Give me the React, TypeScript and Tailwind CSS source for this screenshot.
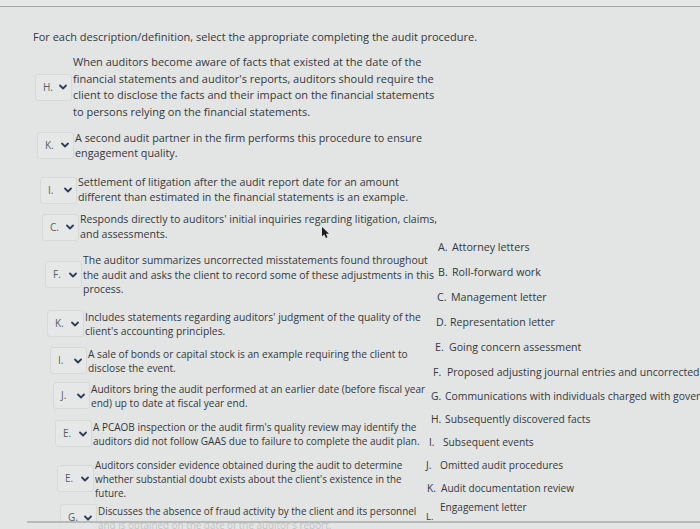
import type { ReactNode } from "react";

type Item = {
  value: string;
  className: string;
  text: string;
  lines: string[];
};

const items: Item[] = [
  {
    value: "H.",
    className: "ml-[35px] mt-[9px]",
    text: "text-[11px] leading-[16.5px]",
    lines: [
      "When auditors become aware of facts that existed at the date of the",
      "financial statements and auditor's reports, auditors should require the",
      "client to disclose the facts and their impact on the financial statements",
      "to persons relying on the financial statements.",
    ],
  },
  {
    value: "K.",
    className: "ml-[37px] mt-[10px]",
    text: "text-[10.8px] leading-[15px]",
    lines: ["A second audit partner in the firm performs this procedure to ensure", "engagement quality."],
  },
  {
    value: "I.",
    className: "ml-[40px] mt-[15px]",
    text: "text-[10.7px] leading-[15px]",
    lines: [
      "Settlement of litigation after the audit report date for an amount",
      "different than estimated in the financial statements is an example.",
    ],
  },
  {
    value: "C.",
    className: "ml-[42px] mt-[7px]",
    text: "text-[10.6px] leading-[15px]",
    lines: ["Responds directly to auditors' initial inquiries regarding litigation, claims,", "and assessments."],
  },
  {
    value: "F.",
    className: "ml-[45px] mt-[11px]",
    text: "text-[10.45px] leading-[14.5px]",
    lines: [
      "The auditor summarizes uncorrected misstatements found throughout",
      "the audit and asks the client to record some of these adjustments in this",
      "process.",
    ],
  },
  {
    value: "K.",
    className: "ml-[47px] mt-[13px]",
    text: "text-[10.3px] leading-[14px]",
    lines: [
      "Includes statements regarding auditors' judgment of the quality of the",
      "client's accounting principles.",
    ],
  },
  {
    value: "I.",
    className: "ml-[50px] mt-[9px]",
    text: "text-[10.2px] leading-[14px]",
    lines: ["A sale of bonds or capital stock is an example requiring the client to", "disclose the event."],
  },
  {
    value: "J.",
    className: "ml-[53px] mt-[7px]",
    text: "text-[10.1px] leading-[14px]",
    lines: [
      "Auditors bring the audit performed at an earlier date (before fiscal year",
      "end) up to date at fiscal year end.",
    ],
  },
  {
    value: "E.",
    className: "ml-[55px] mt-[10px]",
    text: "text-[10px] leading-[14px]",
    lines: [
      "A PCAOB inspection or the audit firm's quality review may identify the",
      "auditors did not follow GAAS due to failure to complete the audit plan.",
    ],
  },
  {
    value: "E.",
    className: "ml-[57px] mt-[10px]",
    text: "text-[9.9px] leading-[14px]",
    lines: [
      "Auditors consider evidence obtained during the audit to determine",
      "whether substantial doubt exists about the client's existence in the",
      "future.",
    ],
  },
  {
    value: "G.",
    className: "ml-[60px] mt-[4px]",
    text: "text-[9.9px] leading-[14px]",
    lines: [
      "Discusses the absence of fraud activity by the client and its personnel",
      "and is obtained on the date of the auditor's report.",
    ],
  },
];

const answers = [
  { label: "A.", text: "Attorney letters", className: "ml-[12px] h-[25px] text-[10.7px]" },
  { label: "B.", text: "Roll-forward work", className: "ml-[12px] h-[25px] text-[10.7px]" },
  { label: "C.", text: "Management letter", className: "ml-[11px] h-[25px] text-[10.7px]" },
  { label: "D.", text: "Representation letter", className: "ml-[10px] h-[25px] text-[10.6px]" },
  { label: "E.", text: "Going concern assessment", className: "ml-[9px] h-[25px] text-[10.6px]" },
  { label: "F.", text: "Proposed adjusting journal entries and uncorrected misstatements", className: "ml-[7px] h-[25px] text-[10.5px]" },
  { label: "G.", text: "Communications with individuals charged with governance", className: "ml-[5px] h-[23px] text-[10.4px]" },
  { label: "H.", text: "Subsequently discovered facts", className: "ml-[5px] h-[23px] text-[10.3px]" },
  { label: "I.", text: "Subsequent events", className: "ml-[3px] h-[23px] text-[10.2px]" },
  { label: "J.", text: "Omitted audit procedures", className: "ml-[0px] h-[23px] text-[10.2px]" },
  { label: "K.", text: "Audit documentation review", className: "ml-[1px] h-[23px] text-[10.1px]" },
];

function Chevron() {
  return (
    <svg width="8" height="6" viewBox="0 0 8 6" aria-hidden="true">
      <path d="M1 1.5 4 4.5 7 1.5" fill="none" stroke="#2f3d57" strokeWidth="1.8" strokeLinecap="round" strokeLinejoin="round" />
    </svg>
  );
}

function Dropdown({ value }: { value: string }) {
  return (
    <div className="flex h-[27px] w-[37px] shrink-0 items-center justify-between rounded-[3px] border border-[#d6d9d8] bg-[#e5e8e7] pl-[7px] pr-[4px]">
      <span className="text-[10px] text-[#5a5e62]">{value}</span>
      <Chevron />
    </div>
  );
}

function Row({ item }: { item: Item }) {
  const text: ReactNode[] = [];
  item.lines.forEach((line, i) => {
    if (i > 0) text.push(<br key={`br${i}`} />);
    text.push(line);
  });
  return (
    <div className={`flex items-center gap-[1px] ${item.className}`}>
      <Dropdown value={item.value} />
      <p className={`whitespace-nowrap ${item.text}`}>{text}</p>
    </div>
  );
}

export default function App() {
  return (
    <div className="relative h-[529px] w-[700px] overflow-hidden bg-[#e2e5e3] font-['Open_Sans',sans-serif] text-[#35383c]">
      <div className="h-[7px] border-b border-[#a3a6a5] bg-[#e6e8e7]" />
      <h1 className="pl-[33px] pt-[22px] text-[11px] leading-[16px]">
        For each description/definition, select the appropriate completing the audit procedure.
      </h1>

      <div className="flex">
        <div className="flex w-[426px] shrink-0 flex-col">
          {items.map((item, i) => (
            <Row key={i} item={item} />
          ))}
        </div>

        <div className="flex flex-1 flex-col pt-[190px]">
          {answers.map((a) => (
            <div key={a.label} className={`flex items-center whitespace-nowrap ${a.className}`}>
              <span className="w-[14px] shrink-0">{a.label}</span>
              <span>{a.text}</span>
            </div>
          ))}
          <div className="flex h-[23px] whitespace-nowrap text-[10.1px]">
            <span className="w-[14px] shrink-0 self-end text-[9.5px] leading-[12px]">L.</span>
            <span className="self-start leading-[14px]">Engagement letter</span>
          </div>
        </div>
      </div>

      <div className="absolute left-[27px] right-0 top-[521px] h-[8px] border-t-2 border-[#b7bab9] bg-[#e2e5e3]/80" />

      <svg className="absolute left-[321px] top-[226px]" width="9" height="13" viewBox="0 0 9 13" aria-hidden="true">
        <path d="M1 1v9.5l2.3-2.2 1.6 3.6 1.6-.7-1.6-3.5H8z" fill="#1c1c1c" />
      </svg>
    </div>
  );
}
